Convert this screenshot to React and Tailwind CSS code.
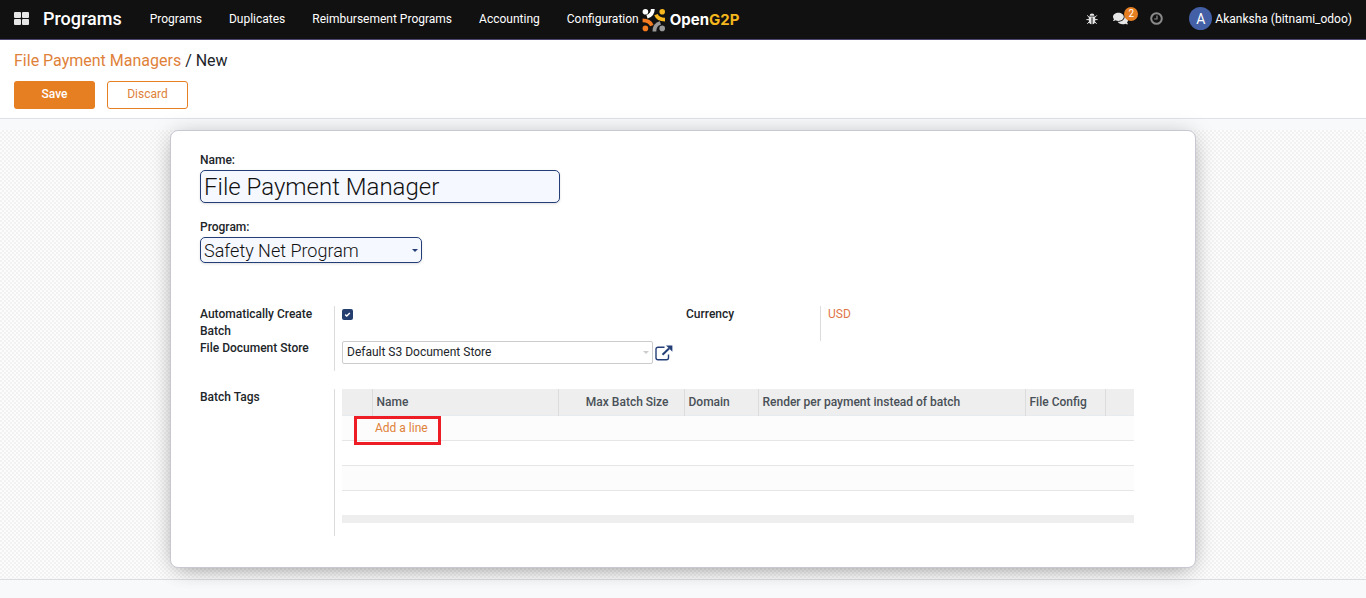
import React from "react";
import { FaComments } from "react-icons/fa";

const menu = ["Programs", "Duplicates", "Reimbursement Programs", "Accounting", "Configuration"];

function OpenG2PLogo() {
  return (
    <a href="#home" className="flex items-center gap-1 pt-0.5" aria-label="OpenG2P">
      <svg width="24" height="24" viewBox="0 0 24 24" fill="none" aria-hidden="true">
        <circle cx="3.4" cy="3.8" r="2.8" fill="#fff" />
        <circle cx="20.2" cy="3.8" r="2.8" fill="#f7b71d" />
        <circle cx="3.4" cy="20.4" r="2.8" fill="#f47b20" />
        <circle cx="20.2" cy="20.4" r="2.8" fill="#999" />
        <path d="M10.8 1C10.8 5 9 7.6 5 8.8" stroke="#fff" strokeWidth="3.8" />
        <path d="M14 6.6C15.2 9.6 18 11.6 23 11.6" stroke="#f7b71d" strokeWidth="3.8" />
        <path d="M0.6 12.4C5.4 12.4 8.4 14.2 9.8 17.6" stroke="#f47b20" strokeWidth="3.8" />
        <path d="M12.4 23.4C12.4 19 14.6 16 18.4 15" stroke="#999" strokeWidth="3.8" />
      </svg>
      <span className="font-[Inter] text-[15px] leading-5 font-bold text-white">
        Open<span className="text-[#f4b71c]">G2P</span>
      </span>
    </a>
  );
}

function BugIcon() {
  return (
    <svg width="12" height="12" viewBox="0 0 12 12" fill="none" aria-hidden="true">
      <path d="M3.6 2.8A2.4 2.3 0 0 1 8.4 2.8Z" fill="currentColor" />
      <path d="M2.8 3.4H9.2V8A3.2 3.4 0 0 1 6.5 11.3V4.4H5.5V11.3A3.2 3.4 0 0 1 2.8 8Z" fill="currentColor" />
      <path d="M3 4.2L1.2 2.4M9 4.2L10.8 2.4M3 6.6H0.4M9 6.6H11.6M3.2 8.8L1.4 10.8M8.8 8.8L10.6 10.8" stroke="currentColor" strokeWidth="1" />
    </svg>
  );
}

function Navbar() {
  return (
    <header className="flex h-10 items-center border-b border-[#4b4570] bg-[#111] px-3.5 pb-0.5 text-white">
      <button type="button" aria-label="Applications" className="mr-3.5">
        <svg width="15" height="13" viewBox="0 0 15 13" fill="#e6e6e6" aria-hidden="true">
          <rect x="0" y="0" width="7" height="6" rx="1" />
          <rect x="8" y="0" width="7" height="6" rx="1" />
          <rect x="0" y="7" width="7" height="6" rx="1" />
          <rect x="8" y="7" width="7" height="6" rx="1" />
        </svg>
      </button>
      <a href="#programs" className="mr-7 text-lg font-medium">Programs</a>
      <nav className="mr-[3px] flex gap-[27px] text-xs">
        {menu.map((item) => (
          <a key={item} href="#menu" className="whitespace-nowrap">{item}</a>
        ))}
      </nav>
      <OpenG2PLogo />
      <div className="ml-auto flex items-center">
        <button type="button" aria-label="Debug" className="mr-[15px] text-[#e6e6e6]">
          <BugIcon />
        </button>
        <button type="button" aria-label="Messages" className="relative mr-[22px] text-[#e6e6e6]">
          <FaComments size={15} />
          <span className="absolute -top-1 left-[11px] h-3.5 w-3.5 rounded-full bg-[#e67e22] text-center text-[10px] leading-[14px] text-white">2</span>
        </button>
        <button type="button" aria-label="Activities" className="mr-[26px]">
          <svg width="13" height="13" viewBox="0 0 13 13" fill="none" stroke="#8a8a8a" aria-hidden="true">
            <circle cx="6.5" cy="6.5" r="5.3" strokeWidth="2" />
            <path d="M7 3.5V7H4.2" strokeWidth="1.2" />
          </svg>
        </button>
        <button type="button" className="flex items-center gap-[3px] text-xs">
          <span className="flex h-[23px] w-[23px] items-center justify-center rounded-full bg-[#435fa5] text-sm">A</span>
          Akanksha (bitnami_odoo)
        </button>
      </div>
    </header>
  );
}

function Caret({ className }) {
  return (
    <svg width="6" height="3" viewBox="0 0 6 3" className={className} aria-hidden="true">
      <path d="M0 0H6L3 3Z" fill="currentColor" />
    </svg>
  );
}

function TagsTable() {
  const th = "border-l border-[#dcdcdc] pl-1 text-left font-medium";
  return (
    <table className="w-full table-fixed border-collapse text-xs text-[#495057]">
      <colgroup>
        <col className="w-[30px]" />
        <col className="w-[186px]" />
        <col className="w-[126px]" />
        <col className="w-[74px]" />
        <col />
        <col className="w-[80px]" />
        <col className="w-[29px]" />
      </colgroup>
      <thead>
        <tr className="h-[26px] border-b border-[#e6ebf0] bg-[#eee]">
          <th aria-label="Handle"></th>
          <th className={th}>Name</th>
          <th className="border-l border-[#dcdcdc] pr-[15px] text-right font-medium">Max Batch Size</th>
          <th className={th}>Domain</th>
          <th className={th}>Render per payment instead of batch</th>
          <th className={th}>File Config</th>
          <th className={th} aria-label="Actions"></th>
        </tr>
      </thead>
      <tbody>
        <tr className="h-[25px] border-b border-[#e6e6e6] bg-[#fcfcfc]">
          <td></td>
          <td colSpan={6} className="relative pl-[3px]">
            <a href="#add" className="text-[#e08139]">Add a line</a>
            <span className="pointer-events-none absolute top-0 -left-[18px] h-[29px] w-[87px] border-3 border-[#ee1c25]"></span>
          </td>
        </tr>
        <tr className="h-[25px] border-b border-[#e6e6e6]"><td colSpan={7}></td></tr>
        <tr className="h-[25px] border-b border-[#e6e6e6] bg-[#fcfcfc]"><td colSpan={7}></td></tr>
        <tr className="h-[25px]"><td colSpan={7}></td></tr>
      </tbody>
      <tfoot>
        <tr className="h-2 bg-[#eee]"><td colSpan={7}></td></tr>
      </tfoot>
    </table>
  );
}

export default function App() {
  const label = "block w-[134px] shrink-0 pr-4 text-xs leading-[17px] font-medium";
  return (
    <div className="flex min-h-screen flex-col bg-[#f8f9fb] font-[Roboto,sans-serif] text-[#212529]">
      <Navbar />
      <div className="border-b border-[#dee2e6] bg-white px-3.5 py-[9px]">
        <div className="text-base leading-6">
          <a href="#managers" className="text-[#e08139]">File Payment Managers</a> / New
        </div>
        <div className="mt-2 flex gap-3 text-xs">
          <button type="button" className="h-7 w-[81px] rounded-[3px] bg-[#e67e22] pb-0.5 font-medium text-white">Save</button>
          <button type="button" className="h-7 w-[81px] rounded-[3px] border border-[#e67e22] bg-white pb-0.5 text-[#e08139]">Discard</button>
        </div>
      </div>
      <main className="mt-[11px] border-b border-[#dcdde0] bg-[#fbfbfb] bg-[conic-gradient(#f2f2f2_25%,#fcfcfc_0_50%,#f2f2f2_0_75%,#fcfcfc_0)] bg-[length:4px_4px] pb-[11px]">
        <form className="mx-auto w-3/4 min-w-[1026px] rounded-lg border border-[#c8c8d3] bg-white pt-5 pr-[61px] pb-[31px] pl-[29px] shadow-[0_5px_20px_-8px_rgba(0,0,0,0.45),0_0_24px_rgba(0,0,0,0.1)]">
          <label htmlFor="name" className="block text-xs leading-[18px] font-medium">Name:</label>
          <input id="name" type="text" defaultValue="File Payment Manager" className="mt-px block h-[33px] w-[360px] rounded-[5px] border border-[#243f78] bg-[#f5f8ff] px-[3px] text-2xl font-light text-[#111] shadow-sm" />
          <label htmlFor="program" className="mt-[15px] block text-xs leading-[18px] font-medium">Program:</label>
          <div className="relative mt-px w-[222px]">
            <select id="program" className="block h-[26px] w-full appearance-none rounded-[5px] border border-[#243f78] bg-[#f5f8ff] px-[3px] pt-px text-lg leading-6 font-light text-[#111] shadow-sm">
              <option>Safety Net Program</option>
            </select>
            <Caret className="pointer-events-none absolute top-3 right-1 text-[#243f78]" />
          </div>

          <div className="mt-[43px] flex items-start">
            <div className="w-[486px] shrink-0">
              <div className="flex">
                <label htmlFor="auto" className={label}>Automatically Create Batch</label>
                <div className="grow border-l border-[#dcdcdc] pl-[7px]">
                  <span className="relative mt-[3px] block h-[11px] w-[11px]">
                    <input id="auto" type="checkbox" defaultChecked className="block h-[11px] w-[11px] appearance-none rounded-xs bg-[#243f6f]" />
                    <svg viewBox="0 0 11 11" className="pointer-events-none absolute inset-0" fill="none" stroke="#fff" strokeWidth="1.4" aria-hidden="true">
                      <path d="M3.2 5.6L4.8 7L7.8 4" />
                    </svg>
                  </span>
                </div>
              </div>
              <div className="flex">
                <label htmlFor="store" className={label}>File Document Store</label>
                <div className="flex grow items-center border-l border-[#dcdcdc] pt-px pb-[7px] pl-[7px]">
                  <div className="relative w-[311px]">
                    <select id="store" className="block h-[23px] w-full appearance-none rounded-xs border border-[#ccc] bg-white px-1 pb-0.5 text-xs">
                      <option>Default S3 Document Store</option>
                    </select>
                    <Caret className="pointer-events-none absolute top-2.5 right-1 text-[#ccc]" />
                  </div>
                  <button type="button" aria-label="Open record" className="ml-0.5">
                    <svg width="18" height="16" viewBox="0 0 18 16" fill="none" stroke="#243f78" aria-hidden="true">
                      <path d="M9.5 2.2H3A2 2 0 0 0 1 4.2V12.8A2 2 0 0 0 3 14.8H11.5A2 2 0 0 0 13.5 12.8V9.5" strokeWidth="1.4" />
                      <path d="M7.5 9.8L14 3.5" strokeWidth="2" />
                      <path d="M11 0.5H17.4V6.8Z" fill="#243f78" stroke="none" />
                    </svg>
                  </button>
                </div>
              </div>
            </div>
            <div className="flex">
              <span className={label}>Currency</span>
              <div className="h-[35px] border-l border-[#dcdcdc] pl-[7px] text-xs leading-[17px]">
                <a href="#usd" className="text-[#e0754a]">USD</a>
              </div>
            </div>
          </div>

          <div className="mt-[18px] flex">
            <span className={label}>Batch Tags</span>
            <div className="grow border-l border-[#dcdcdc] pb-[13px] pl-[7px]">
              <TagsTable />
            </div>
          </div>
        </form>
      </main>
    </div>
  );
}
